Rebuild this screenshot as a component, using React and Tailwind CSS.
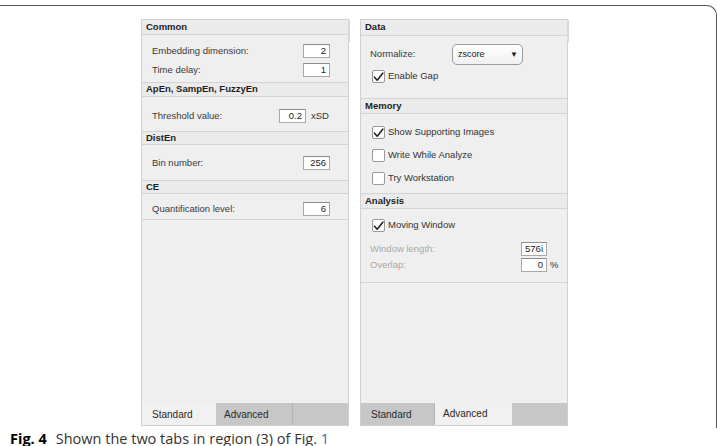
import React from "react";

const Check = ({ on }) => (
  <span className="w-[13px] h-[13px] shrink-0 bg-white border border-[#9a9a9a] rounded-[2px] flex items-center justify-center">
    {on && (
      <svg width="11" height="10" viewBox="0 0 11 10">
        <path d="M1.5 5.2 L4.2 8.2 L9.8 1.2" fill="none" stroke="#222" strokeWidth="1.6" strokeLinecap="round" strokeLinejoin="round" />
      </svg>
    )}
  </span>
);

const Box = ({ value, w = "w-[27px]" }) => (
  <span className={`${w} h-[14px] bg-white border border-[#a8a8a8] border-t-[#8c8c8c] text-right pr-[3px] leading-[12px] text-[#222]`}>
    {value}
  </span>
);

const Header = ({ children, h = "h-[15px]", top = true }) => (
  <div
    className={`${h} px-[4px] flex items-center font-bold text-[#1e1e1e] bg-[#ebebeb] border-b border-[#d4d4d4] ${top ? "border-t" : ""} border-t-[#d4d4d4]`}
  >
    {children}
  </div>
);

const Tabs = ({ active }) => (
  <div className="h-[22px] flex items-stretch text-[10px] text-[#2a2a2a]">
    <div
      className={`w-[74px] pl-[10px] flex items-center ${
        active === 0 ? "bg-[#f1f1f1]" : "bg-[#c7c7c7] border-r border-[#b4b4b4]"
      }`}
    >
      Standard
    </div>
    <div
      className={`w-[77px] pl-[8px] flex items-center ${
        active === 1 ? "bg-[#f1f1f1] -mt-[1px]" : "bg-[#c7c7c7] border-r border-[#b4b4b4]"
      }`}
    >
      Advanced
    </div>
    <div className="flex-1 bg-[#c7c7c7]" />
  </div>
);

const Panel = ({ children, active }) => (
  <div className="w-[208px] h-[407px] border border-[#d0d0d0] bg-[#efefef] flex flex-col relative">
    <div className="absolute right-[-2px] top-0 w-[2px] h-[22px] bg-[#d9d9d9]" />
    <div className="flex-1">{children}</div>
    <Tabs active={active} />
  </div>
);

const Row = ({ label, children, cls = "pr-[18px]" }) => (
  <div className={`h-[14px] flex items-center pl-[10px] ${cls}`}>
    <span className="flex-1 text-[#3a3a3a]">{label}</span>
    {children}
  </div>
);

const CheckRow = ({ on, label }) => (
  <div className="h-[13px] flex items-center gap-[3px] pl-[11px] text-[#333]">
    <Check on={on} />
    <span>{label}</span>
  </div>
);

export default function App() {
  return (
    <div className="w-[717px] h-[446px] bg-white overflow-hidden" style={{ fontFamily: "'Liberation Sans', Arial, sans-serif" }}>
      <div className="mt-[5px] h-[423px] border-t border-r border-[#555] rounded-tr-[10px] flex pl-[141px] pt-[13px] gap-[11px] text-[9.5px]">
        <Panel active={0}>
          <Header top={false}>Common</Header>
          <div className="pt-[9px] pb-[5px] flex flex-col gap-[5px]">
            <Row label="Embedding dimension:">
              <Box value="2" />
            </Row>
            <Row label="Time delay:">
              <Box value="1" />
            </Row>
          </div>
          <Header>ApEn, SampEn, FuzzyEn</Header>
          <div className="pt-[12px] pb-[8px]">
            <Row label="Threshold value:">
              <Box value="0.2" />
              <span className="w-[24px] pl-[5px] text-[#333]">xSD</span>
            </Row>
          </div>
          <Header h="h-[14px]">DistEn</Header>
          <div className="pt-[11px] pb-[10px]">
            <Row label="Bin number:">
              <Box value="256" />
            </Row>
          </div>
          <Header h="h-[14px]">CE</Header>
          <div className="pt-[8px] pb-[3px] border-b border-[#d4d4d4]">
            <Row label="Quantification level:">
              <Box value="6" />
            </Row>
          </div>
        </Panel>

        <Panel active={1}>
          <Header top={false} h="h-[16px]">Data</Header>
          <div className="pt-[8px] pb-[15px] border-b border-[#d4d4d4]">
            <div className="h-[21px] flex items-center pl-[9px]">
              <span className="w-[82px] text-[#3a3a3a]">Normalize:</span>
              <span className="w-[71px] h-[21px] rounded-[5px] border border-[#9c9c9c] bg-gradient-to-b from-white to-[#f0f0f0] flex items-center pl-[5px] pr-[4px] text-[#222] text-[9px]">
                <span className="flex-1">zscore</span>
                <span className="text-[8px]">▼</span>
              </span>
            </div>
            <div className="mt-[5px]">
              <CheckRow on label="Enable Gap" />
            </div>
          </div>
          <Header top={false}>Memory</Header>
          <div className="pt-[12px] pb-[8px] flex flex-col gap-[10px]">
            <CheckRow on label="Show Supporting Images" />
            <CheckRow label="Write While Analyze" />
            <CheckRow label="Try Workstation" />
          </div>
          <Header h="h-[16px]">Analysis</Header>
          <div className="pt-[10px] pb-[10px] border-b border-[#d4d4d4]">
            <CheckRow on label="Moving Window" />
            <div className="mt-[10px] flex flex-col gap-[2px]">
              <div className="h-[14px] flex items-center pl-[9px] pr-[20px]">
                <span className="flex-1 text-[#a9a9a9]">Window length:</span>
                <Box value="576i" w="w-[26px]" />
              </div>
              <div className="h-[14px] flex items-center pl-[9px] pr-[9px]">
                <span className="flex-1 text-[#a9a9a9]">Overlap:</span>
                <Box value="0" w="w-[26px]" />
                <span className="w-[11px] pl-[3px] text-[#333]">%</span>
              </div>
            </div>
          </div>
        </Panel>
      </div>
      <div className="pl-[10px] mt-[1px] text-[14.5px] leading-[20px] text-[#333] whitespace-nowrap" style={{ fontFamily: "'Open Sans', sans-serif" }}>
        <span className="font-bold text-black">Fig. 4</span>
        <span className="ml-[9px]">Shown the two tabs in region (3) of Fig. </span>
        <span className="text-[#2b6cb8]">1</span>
      </div>
    </div>
  );
}
